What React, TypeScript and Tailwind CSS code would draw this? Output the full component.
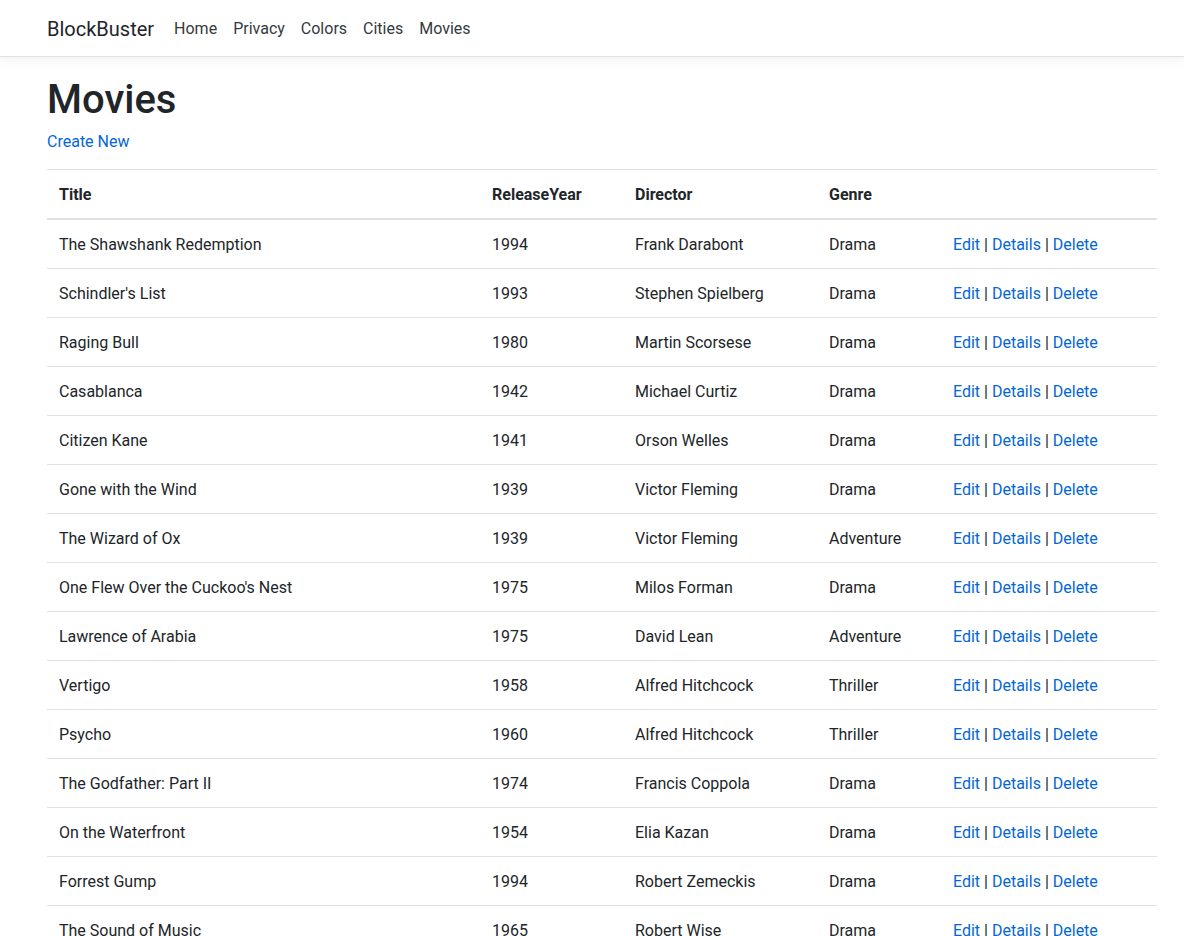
import React from 'react';

type Movie = { title: string; year: number; director: string; genre: string };

const movies: Movie[] = [
  { title: 'The Shawshank Redemption', year: 1994, director: 'Frank Darabont', genre: 'Drama' },
  { title: "Schindler's List", year: 1993, director: 'Stephen Spielberg', genre: 'Drama' },
  { title: 'Raging Bull', year: 1980, director: 'Martin Scorsese', genre: 'Drama' },
  { title: 'Casablanca', year: 1942, director: 'Michael Curtiz', genre: 'Drama' },
  { title: 'Citizen Kane', year: 1941, director: 'Orson Welles', genre: 'Drama' },
  { title: 'Gone with the Wind', year: 1939, director: 'Victor Fleming', genre: 'Drama' },
  { title: 'The Wizard of Ox', year: 1939, director: 'Victor Fleming', genre: 'Adventure' },
  { title: "One Flew Over the Cuckoo's Nest", year: 1975, director: 'Milos Forman', genre: 'Drama' },
  { title: 'Lawrence of Arabia', year: 1975, director: 'David Lean', genre: 'Adventure' },
  { title: 'Vertigo', year: 1958, director: 'Alfred Hitchcock', genre: 'Thriller' },
  { title: 'Psycho', year: 1960, director: 'Alfred Hitchcock', genre: 'Thriller' },
  { title: 'The Godfather: Part II', year: 1974, director: 'Francis Coppola', genre: 'Drama' },
  { title: 'On the Waterfront', year: 1954, director: 'Elia Kazan', genre: 'Drama' },
  { title: 'Forrest Gump', year: 1994, director: 'Robert Zemeckis', genre: 'Drama' },
  { title: 'The Sound of Music', year: 1965, director: 'Robert Wise', genre: 'Drama' },
];

const navLinks = ['Home', 'Privacy', 'Colors', 'Cities', 'Movies'];

const App: React.FC = () => {
  return (
    <div className="min-h-screen bg-white text-[#212529] text-base leading-6 font-['Segoe_UI',Roboto,'Liberation_Sans',sans-serif]">
      {/* Navbar */}
      <nav className="h-[57px] border-b border-[#dee2e6] bg-white shadow-[0_4px_12px_rgba(0,0,0,0.05)]">
        <div className="flex items-center h-14 pl-[47px] pt-[2px]">
          <span className="text-xl leading-[30px] text-[#212529] mr-3">BlockBuster</span>
          <ul className="flex">
            {navLinks.map((l) => (
              <li key={l} className="px-2 py-2 text-[#343a40]">{l}</li>
            ))}
          </ul>
        </div>
      </nav>

      {/* Main */}
      <main className="pl-[47px] pt-4 w-[1157px]">
        <h1 className="text-[40px] leading-[48px] font-medium mt-[3px] mb-[5px]">Movies</h1>
        <p className="pt-px mb-[15px]">
          <a className="text-[#0366d6] cursor-pointer">Create New</a>
        </p>
        <table className="w-[1110px] border-collapse text-left">
          <thead>
            <tr className="border-t border-[#dee2e6] border-b-2">
              <th className="w-[433px] px-3 pt-[13px] pb-[11px] font-bold">Title</th>
              <th className="w-[143px] px-3 pt-[13px] pb-[11px] font-bold">ReleaseYear</th>
              <th className="w-[194px] px-3 pt-[13px] pb-[11px] font-bold">Director</th>
              <th className="w-[124px] px-3 pt-[13px] pb-[11px] font-bold">Genre</th>
              <th className="px-3 pt-[13px] pb-[11px]"></th>
            </tr>
          </thead>
          <tbody>
            {movies.map((m) => (
              <tr key={m.title} className="border-t border-[#dee2e6]">
                <td className="px-3 pt-[13px] pb-[11px]">{m.title}</td>
                <td className="px-3 pt-[13px] pb-[11px]">{m.year}</td>
                <td className="px-3 pt-[13px] pb-[11px]">{m.director}</td>
                <td className="px-3 pt-[13px] pb-[11px]">{m.genre}</td>
                <td className="px-3 pt-[13px] pb-[11px]">
                  <a className="text-[#0366d6]">Edit</a> | <a className="text-[#0366d6]">Details</a> |{' '}
                  <a className="text-[#0366d6]">Delete</a>
                </td>
              </tr>
            ))}
          </tbody>
        </table>
      </main>
    </div>
  );
};

export default App;
